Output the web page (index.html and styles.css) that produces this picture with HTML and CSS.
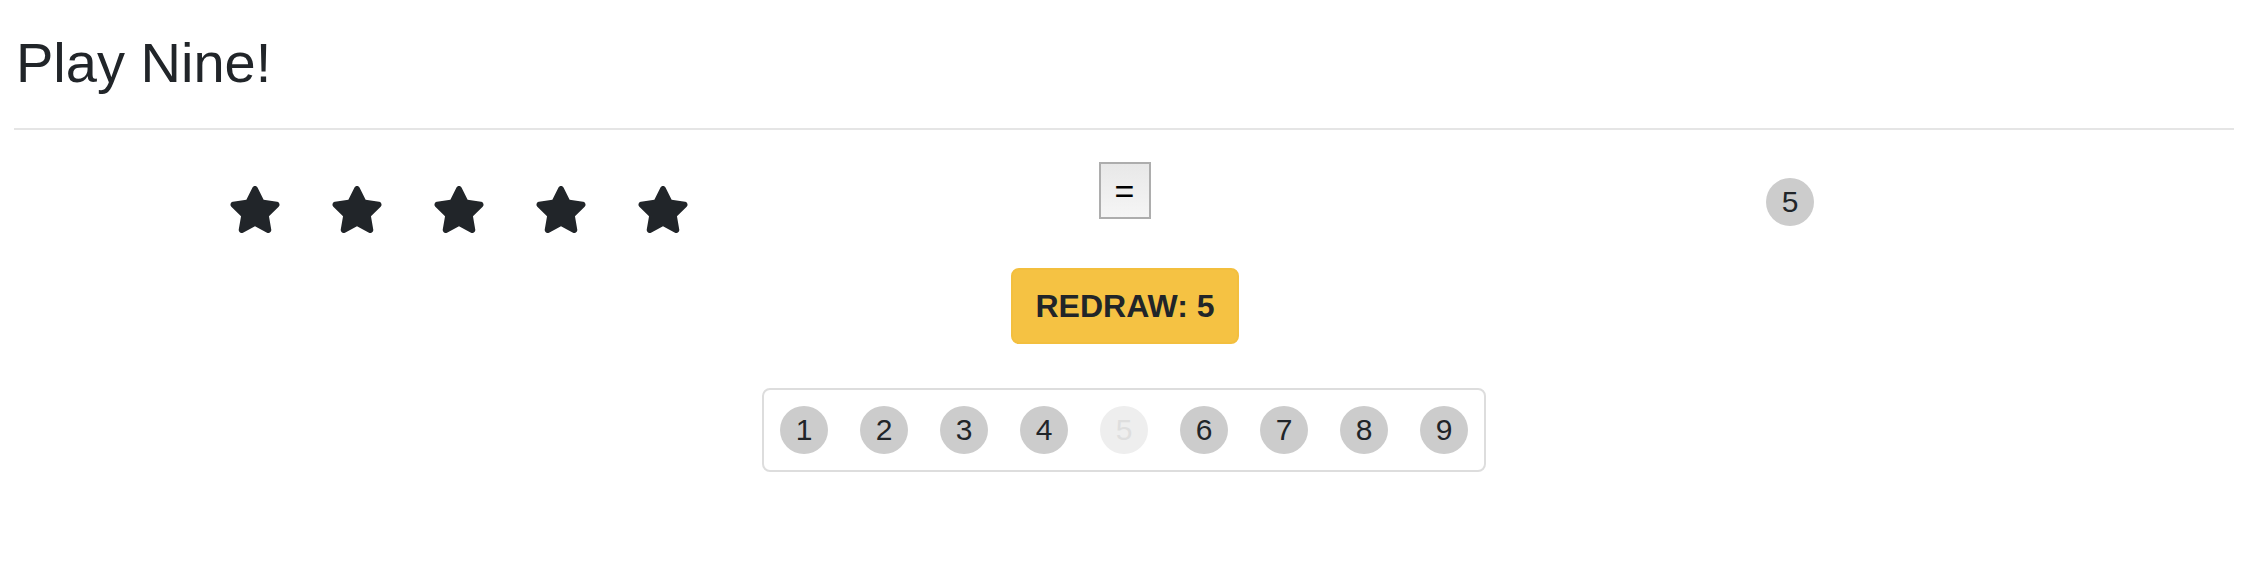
FILE: index.html
```html
<!DOCTYPE html>
<html lang="en">
<head>
<meta charset="utf-8">
<title>Play Nine!</title>
<link rel="stylesheet" href="styles.css">
</head>
<body>
<div class="page">
  <h3 class="title">Play Nine!</h3>
  <hr class="rule">
  <div class="game-row">
    <div class="stars-col">
      <div class="stars">
        <svg class="star" viewBox="18 0 540 512"><path d="M259.3 17.8L194 150.2 47.9 171.5c-26.2 3.8-36.7 36.1-17.7 54.6l105.7 103-25 145.5c-4.5 26.3 23.2 46 46.4 33.7L288 439.6l130.7 68.7c23.2 12.2 50.9-7.4 46.4-33.7l-25-145.5 105.7-103c19-18.5 8.5-50.8-17.7-54.6L382 150.2 316.7 17.8c-11.7-23.6-45.6-23.9-57.4 0z"/></svg>
        <svg class="star" viewBox="18 0 540 512"><path d="M259.3 17.8L194 150.2 47.9 171.5c-26.2 3.8-36.7 36.1-17.7 54.6l105.7 103-25 145.5c-4.5 26.3 23.2 46 46.4 33.7L288 439.6l130.7 68.7c23.2 12.2 50.9-7.4 46.4-33.7l-25-145.5 105.7-103c19-18.5 8.5-50.8-17.7-54.6L382 150.2 316.7 17.8c-11.7-23.6-45.6-23.9-57.4 0z"/></svg>
        <svg class="star" viewBox="18 0 540 512"><path d="M259.3 17.8L194 150.2 47.9 171.5c-26.2 3.8-36.7 36.1-17.7 54.6l105.7 103-25 145.5c-4.5 26.3 23.2 46 46.4 33.7L288 439.6l130.7 68.7c23.2 12.2 50.9-7.4 46.4-33.7l-25-145.5 105.7-103c19-18.5 8.5-50.8-17.7-54.6L382 150.2 316.7 17.8c-11.7-23.6-45.6-23.9-57.4 0z"/></svg>
        <svg class="star" viewBox="18 0 540 512"><path d="M259.3 17.8L194 150.2 47.9 171.5c-26.2 3.8-36.7 36.1-17.7 54.6l105.7 103-25 145.5c-4.5 26.3 23.2 46 46.4 33.7L288 439.6l130.7 68.7c23.2 12.2 50.9-7.4 46.4-33.7l-25-145.5 105.7-103c19-18.5 8.5-50.8-17.7-54.6L382 150.2 316.7 17.8c-11.7-23.6-45.6-23.9-57.4 0z"/></svg>
        <svg class="star" viewBox="18 0 540 512"><path d="M259.3 17.8L194 150.2 47.9 171.5c-26.2 3.8-36.7 36.1-17.7 54.6l105.7 103-25 145.5c-4.5 26.3 23.2 46 46.4 33.7L288 439.6l130.7 68.7c23.2 12.2 50.9-7.4 46.4-33.7l-25-145.5 105.7-103c19-18.5 8.5-50.8-17.7-54.6L382 150.2 316.7 17.8c-11.7-23.6-45.6-23.9-57.4 0z"/></svg>
      </div>
    </div>
    <div class="mid-col">
      <button class="equals">=</button>
    </div>
    <div class="answer-col">
      <span class="number">5</span>
    </div>
  </div>
  <div class="redraw-row">
    <button class="redraw">REDRAW: 5</button>
  </div>
  <div class="numbers-row">
    <div class="numbers-frame">
      <span class="number">1</span>
      <span class="number">2</span>
      <span class="number">3</span>
      <span class="number">4</span>
      <span class="number used">5</span>
      <span class="number">6</span>
      <span class="number">7</span>
      <span class="number">8</span>
      <span class="number">9</span>
    </div>
  </div>
</div>
</body>
</html>
```

FILE: styles.css
```css
html, body {
  margin: 0;
  padding: 0;
  background: #ffffff;
}

body {
  font-family: "Liberation Sans", Arial, Helvetica, sans-serif;
  color: #212529;
}

.page {
  padding: 29px 12px 0 14px;
}

.title {
  margin: 0;
  font-size: 56px;
  font-weight: 400;
  line-height: 67px;
  padding-left: 2px;
}

.rule {
  margin: 32px 0 32px 0;
  border: 0;
  border-top: 2px solid #e5e5e5;
  height: 0;
}

.game-row {
  display: grid;
  grid-template-columns: 5fr 2fr 5fr;
  align-items: start;
}

.stars-col {
  padding-left: 216px;
  padding-top: 24px;
}

.stars {
  display: flex;
  gap: 52px;
}

.star {
  width: 50px;
  height: 47px;
  fill: #212529;
  display: block;
}

.mid-col {
  display: flex;
  justify-content: center;
}

.equals {
  width: 52px;
  height: 57px;
  border: 2px solid #adadad;
  background: linear-gradient(#e8e8e8, #f5f5f5);
  font-family: "Liberation Sans", Arial, sans-serif;
  font-size: 34px;
  color: #000;
  padding: 0;
  line-height: 1;
  margin-left: 1px;
}

.answer-col {
  padding-left: 457px;
  padding-top: 16px;
}

.number {
  display: inline-block;
  width: 48px;
  height: 48px;
  border-radius: 50%;
  background: #cccccc;
  text-align: center;
  line-height: 48px;
  font-size: 30px;
  color: #212529;
}

.number.used {
  background: #eeeeee;
  color: #dedede;
}

.redraw-row {
  display: flex;
  justify-content: center;
  margin-top: 35px;
}

.redraw {
  width: 228px;
  height: 76px;
  background: #f5c243;
  border: 2px solid #f3bf3e;
  border-radius: 8px;
  font-family: "Liberation Sans", Arial, sans-serif;
  font-weight: 700;
  font-size: 32px;
  color: #212529;
  padding: 0;
  margin-left: 2px;
}

.numbers-row {
  display: flex;
  justify-content: center;
  margin-top: 44px;
}

.numbers-frame {
  display: flex;
  gap: 32px;
  padding: 16px;
  border: 2px solid #dddddd;
  border-radius: 8px;
}
```
